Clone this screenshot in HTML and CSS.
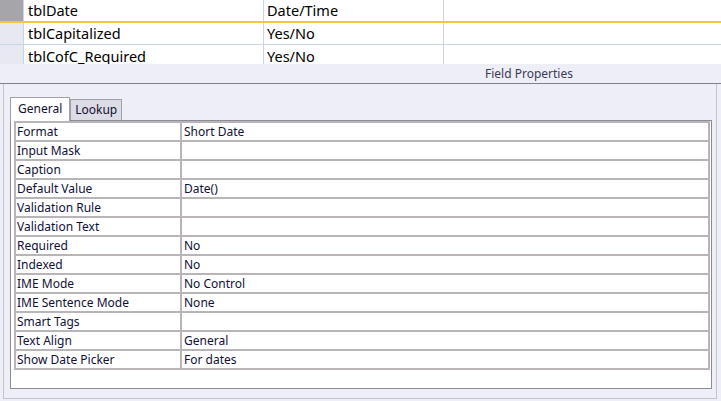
FILE: index.html
```html
<!DOCTYPE html>
<html>
<head>
<meta charset="utf-8">
<link rel="stylesheet" href="styles.css">
</head>
<body>
<div class="screen">
  <div class="grid">
    <div class="grow current">
      <div class="sel sel-active"></div>
      <div class="cell name">tblDate</div>
      <div class="cell type">Date/Time</div>
      <div class="cell desc"></div>
    </div>
    <div class="grow">
      <div class="sel"></div>
      <div class="cell name">tblCapitalized</div>
      <div class="cell type">Yes/No</div>
      <div class="cell desc"></div>
    </div>
    <div class="grow last">
      <div class="sel"></div>
      <div class="cell name">tblCofC_Required</div>
      <div class="cell type">Yes/No</div>
      <div class="cell desc"></div>
    </div>
  </div>
  <div class="fp-header"><span>Field Properties</span></div>
  <div class="fp-body">
    <div class="frame">
      <div class="tabs">
        <div class="tab active">General</div>
        <div class="tab">Lookup</div>
      </div>
      <div class="panel">
        <table class="props">
          <tr><td class="k">Format</td><td>Short Date</td></tr>
          <tr><td class="k">Input Mask</td><td></td></tr>
          <tr><td class="k">Caption</td><td></td></tr>
          <tr><td class="k">Default Value</td><td>Date()</td></tr>
          <tr><td class="k">Validation Rule</td><td></td></tr>
          <tr><td class="k">Validation Text</td><td></td></tr>
          <tr><td class="k">Required</td><td>No</td></tr>
          <tr><td class="k">Indexed</td><td>No</td></tr>
          <tr><td class="k">IME Mode</td><td>No Control</td></tr>
          <tr><td class="k">IME Sentence Mode</td><td>None</td></tr>
          <tr><td class="k">Smart Tags</td><td></td></tr>
          <tr><td class="k">Text Align</td><td>General</td></tr>
          <tr><td class="k">Show Date Picker</td><td>For dates</td></tr>
        </table>
      </div>
    </div>
  </div>
</div>
</body>
</html>
```
FILE: styles.css
```css
* { box-sizing: border-box; }
html, body { margin: 0; padding: 0; }
body {
  width: 721px;
  height: 401px;
  overflow: hidden;
  background: #eeeef7;
  font-family: "Noto Sans", "Open Sans", sans-serif;
  color: #101030;
}
.screen { width: 721px; height: 401px; display: flex; flex-direction: column; }

.grid { background: #ffffff; }
.grow {
  display: grid;
  grid-template-columns: 24px 240px 180px 1fr;
  height: 22px;
  border-bottom: 1px solid #c6d4ee;
  overflow: hidden;
}
.grow.current { height: 23px; border-bottom: 2px solid #f4c838; }
.grow.last { height: 19px; border-bottom: none; }
.sel {
  background: #e8e8f0;
  border-right: 1px solid #c6d4ee;
}
.sel-active { background: #a6a6aa; }
.cell {
  font-size: 14.5px;
  line-height: 21px;
  padding-left: 4px;
  color: #000000;
  border-right: 1px solid #c6d4ee;
  white-space: nowrap;
  overflow: hidden;
}
.grow.last .cell { line-height: 22px; }
.cell.type { padding-left: 3px; }
.cell.desc { border-right: none; }

.fp-header {
  height: 20px;
  border-bottom: 1px solid #80808a;
  font-size: 12px;
  line-height: 20px;
  color: #3a3a58;
  padding-left: 485px;
}

.fp-body {
  flex: 1;
  padding: 0 4px 2px 3px;
}
.frame {
  height: 100%;
  border-left: 1px solid #c4c4cc;
  border-right: 1px solid #c4c4cc;
  border-bottom: 1px solid #c4c4cc;
  padding: 12px 4px 9px 6px;
  display: flex;
  flex-direction: column;
}
.tabs { display: flex; align-items: flex-end; height: 24px; }
.tab {
  font-size: 12px;
  color: #101030;
  border: 1px solid #a0a0a8;
  border-bottom: none;
  background: #dcdce6;
  height: 21px;
  line-height: 20px;
  padding: 0 4px;
}
.tab.active {
  background: #ffffff;
  height: 24px;
  line-height: 22px;
  padding: 0 7px;
  position: relative;
  top: 1px;
}
.panel {
  flex: 1;
  background: #ffffff;
  border: 1px solid #8c8c94;
  padding: 0 2px 0 3px;
}
.props {
  border-collapse: collapse;
  width: 696px;
  margin-top: 0;
}
.props td {
  border: 2px solid #b8b4b8;
  height: 19px;
  padding: 0 0 0 2px;
  font-size: 12px;
  line-height: 16px;
  color: #101038;
  white-space: nowrap;
}
.props td.k { width: 166px; padding-left: 1px; }
```
